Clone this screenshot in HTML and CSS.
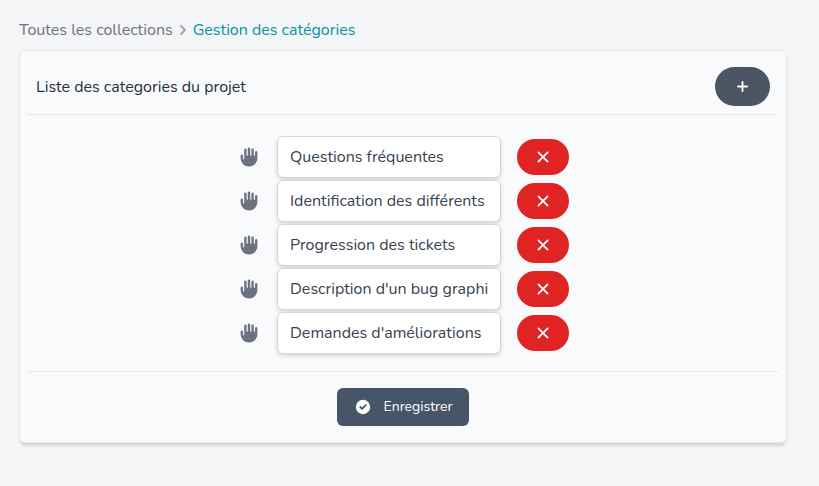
FILE: index.html
```html
<!DOCTYPE html>
<html lang="fr">
<head>
<meta charset="utf-8">
<meta name="viewport" content="width=device-width, initial-scale=1">
<title>Gestion des catégories</title>
<link rel="stylesheet" href="styles.css">
</head>
<body>
<svg class="sprite" aria-hidden="true">
  <symbol id="hand" viewBox="0 0 20 20">
    <path fill-rule="evenodd" d="M9 3a1 1 0 012 0v5.5a.5.5 0 001 0V4a1 1 0 112 0v4.5a.5.5 0 001 0V6a1 1 0 112 0v5a7 7 0 11-14 0V9a1 1 0 012 0v2.5a.5.5 0 001 0V4a1 1 0 012 0v4.5a.5.5 0 001 0V3z" clip-rule="evenodd"/>
  </symbol>
  <symbol id="cross" viewBox="0 0 20 20">
    <path fill-rule="evenodd" d="M4.293 4.293a1 1 0 011.414 0L10 8.586l4.293-4.293a1 1 0 111.414 1.414L11.414 10l4.293 4.293a1 1 0 01-1.414 1.414L10 11.414l-4.293 4.293a1 1 0 01-1.414-1.414L8.586 10 4.293 5.707a1 1 0 010-1.414z" clip-rule="evenodd"/>
  </symbol>
</svg>
<main class="page">
  <nav class="breadcrumb" aria-label="Fil d'Ariane">
    <a class="crumb" href="#">Toutes les collections</a>
    <svg class="chevron" viewBox="0 0 20 20" aria-hidden="true"><path fill-rule="evenodd" d="M7.293 14.707a1 1 0 010-1.414L10.586 10 7.293 6.707a1 1 0 011.414-1.414l4 4a1 1 0 010 1.414l-4 4a1 1 0 01-1.414 0z" clip-rule="evenodd"/></svg>
    <a class="crumb crumb-current" href="#" aria-current="page">Gestion des catégories</a>
  </nav>
  <form class="card">
    <header class="card-header">
      <h1 class="title">Liste des categories du projet</h1>
      <button class="pill pill-add" type="button" aria-label="Ajouter">
        <svg class="icon-add" viewBox="0 0 15 15" aria-hidden="true"><path d="M7.500 3v9M3 7.500h9" fill="none" stroke="currentColor" stroke-width="1.900" stroke-linecap="round"/></svg>
      </button>
    </header>
    <ul class="list">
      <li class="row">
        <svg class="hand" aria-hidden="true"><use href="#hand"/></svg>
        <input class="field" type="text" aria-label="Catégorie 1" value="Questions fréquentes">
        <button class="pill pill-delete" type="button" aria-label="Supprimer"><svg class="icon-delete" aria-hidden="true"><use href="#cross"/></svg></button>
      </li>
      <li class="row">
        <svg class="hand" aria-hidden="true"><use href="#hand"/></svg>
        <input class="field" type="text" aria-label="Catégorie 2" value="Identification des différents">
        <button class="pill pill-delete" type="button" aria-label="Supprimer"><svg class="icon-delete" aria-hidden="true"><use href="#cross"/></svg></button>
      </li>
      <li class="row">
        <svg class="hand" aria-hidden="true"><use href="#hand"/></svg>
        <input class="field" type="text" aria-label="Catégorie 3" value="Progression des tickets">
        <button class="pill pill-delete" type="button" aria-label="Supprimer"><svg class="icon-delete" aria-hidden="true"><use href="#cross"/></svg></button>
      </li>
      <li class="row">
        <svg class="hand" aria-hidden="true"><use href="#hand"/></svg>
        <input class="field" type="text" aria-label="Catégorie 4" value="Description d'un bug graphi">
        <button class="pill pill-delete" type="button" aria-label="Supprimer"><svg class="icon-delete" aria-hidden="true"><use href="#cross"/></svg></button>
      </li>
      <li class="row">
        <svg class="hand" aria-hidden="true"><use href="#hand"/></svg>
        <input class="field" type="text" aria-label="Catégorie 5" value="Demandes d'améliorations">
        <button class="pill pill-delete" type="button" aria-label="Supprimer"><svg class="icon-delete" aria-hidden="true"><use href="#cross"/></svg></button>
      </li>
    </ul>
    <footer class="card-footer">
      <button class="save" type="submit">
        <svg class="icon-save" viewBox="0 0 20 20" aria-hidden="true"><path fill-rule="evenodd" d="M10 18a8 8 0 100-16 8 8 0 000 16zm3.707-9.293a1 1 0 00-1.414-1.414L9 10.586 7.707 9.293a1 1 0 00-1.414 1.414l2 2a1 1 0 001.414 0l4-4z" clip-rule="evenodd"/></svg>
        Enregistrer
      </button>
    </footer>
  </form>
</main>
</body>
</html>
```
FILE: styles.css
```css
* {
  box-sizing: border-box;
}

body {
  margin: 0;
  background: #f4f5f7;
  color: #252f3f;
  font: 16px/24px Nunito, Lato, sans-serif;
}

svg {
  display: block;
  flex: none;
  fill: currentColor;
}

.sprite {
  width: 0;
  height: 0;
  position: absolute;
}

.page {
  padding: 18px 32px 40px 19px;
}

.breadcrumb {
  display: flex;
  align-items: center;
  margin-bottom: 8px;
}

.crumb {
  color: #6b7280;
  text-decoration: none;
}

.crumb-current {
  color: #0694a2;
}

.chevron {
  width: 20px;
  height: 20px;
  color: #9fa6b2;
}

.card {
  padding: 8px;
  background: #f9fafc;
  border: 1px solid #e5e7eb;
  border-radius: 6px;
  box-shadow: 0 4px 3px -1px rgba(0, 0, 0, 0.12);
}

.card-header {
  display: flex;
  align-items: center;
  justify-content: space-between;
  padding: 8px;
  border-bottom: 1px solid #e5e7eb;
}

.title {
  margin: 0;
  font-size: 16px;
  font-weight: 400;
}

.pill {
  display: flex;
  align-items: center;
  justify-content: center;
  padding: 0;
  border: 0;
  border-radius: 20px;
  color: #fff;
}

.pill-add {
  width: 55px;
  height: 39px;
  background: #4b5563;
}

.icon-add {
  width: 15px;
  height: 15px;
}

.icon-delete,
.icon-save {
  width: 18px;
  height: 18px;
}

.list {
  display: flex;
  flex-direction: column;
  gap: 2px;
  margin: 0;
  padding: 21px 0 17px;
  list-style: none;
}

.row {
  display: flex;
  align-items: center;
  justify-content: center;
  gap: 16px;
}

.hand {
  width: 24px;
  height: 24px;
  color: #6b7280;
}

.field {
  width: 224px;
  height: 42px;
  padding: 8px 12px;
  background: #fff;
  border: 1px solid #d2d6dc;
  border-radius: 6px;
  box-shadow: 0 2px 4px rgba(0, 0, 0, 0.14);
  color: #374151;
  font: inherit;
}

.pill-delete {
  width: 52px;
  height: 36px;
  background: #e02424;
}

.card-footer {
  display: flex;
  justify-content: center;
  padding: 16px 0 8px;
  border-top: 1px solid #e5e7eb;
}

.save {
  display: flex;
  align-items: center;
  gap: 12px;
  height: 38px;
  padding: 0 17px;
  background: #475569;
  border: 0;
  border-radius: 6px;
  color: #fff;
  font: 14px/20px Nunito, Lato, sans-serif;
}
```
